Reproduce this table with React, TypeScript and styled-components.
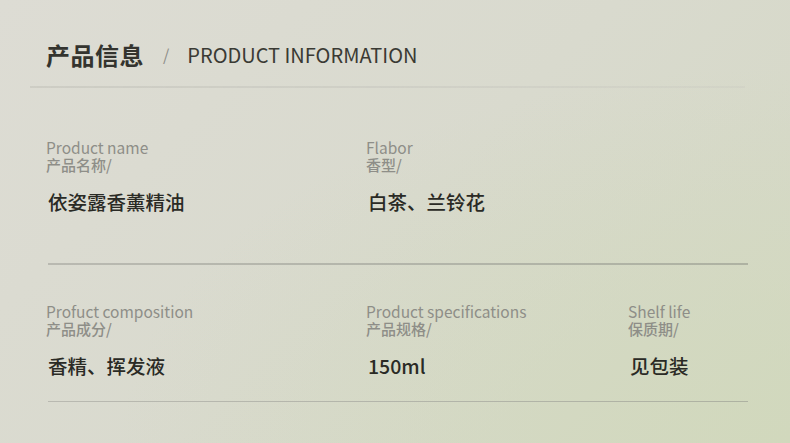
import styled, { createGlobalStyle } from "styled-components";

const GlobalStyle = createGlobalStyle`
  html, body {
    margin: 0;
    padding: 0;
  }
  body {
    font-family: "Noto Sans CJK SC", "Noto Sans", sans-serif;
  }
`;

type Field = { en: string; zh: string; value: string };

const rows: { top: number; bottom: number; fields: Field[] }[] = [
  {
    top: 50,
    bottom: 48,
    fields: [
      { en: "Product name", zh: "产品名称/", value: "依姿露香薰精油" },
      { en: "Flabor", zh: "香型/", value: "白茶、兰铃花" },
    ],
  },
  {
    top: 37,
    bottom: 22,
    fields: [
      { en: "Profuct composition", zh: "产品成分/", value: "香精、挥发液" },
      { en: "Product specifications", zh: "产品规格/", value: "150ml" },
      { en: "Shelf life", zh: "保质期/", value: "见包装" },
    ],
  },
];

export default function App() {
  return (
    <>
      <GlobalStyle />
      <Page>
        <Header>
          <TitleZh>产品信息</TitleZh>
          <Slash>/</Slash>
          <TitleEn>PRODUCT INFORMATION</TitleEn>
        </Header>
        <HeaderRule />
        {rows.map((row, i) => (
          <div key={i}>
            <Row $top={row.top} $bottom={row.bottom}>
              {row.fields.map((f) => (
                <Cell key={f.en}>
                  <LabelEn>{f.en}</LabelEn>
                  <LabelZh>{f.zh}</LabelZh>
                  <Value>{f.value}</Value>
                </Cell>
              ))}
            </Row>
            <RowRule />
          </div>
        ))}
      </Page>
    </>
  );
}

const Page = styled.div`
  width: 790px;
  height: 443px;
  box-sizing: border-box;
  padding: 39px 0 0 30px;
  overflow: hidden;
  background:
    radial-gradient(ellipse at 100% 100%, rgba(208, 216, 186, 0.75) 0%, rgba(208, 216, 186, 0) 60%),
    linear-gradient(135deg, #dddcd4 0%, #d9dace 50%, #d4d8c4 100%);
`;

const Header = styled.div`
  display: flex;
  align-items: center;
  height: 30px;
  padding-left: 16px;
`;

const TitleZh = styled.div`
  font-size: 24px;
  font-weight: 700;
  color: #34342f;
  letter-spacing: 0.5px;
`;

const Slash = styled.div`
  margin: 0 18px 0 19px;
  font-size: 16px;
  color: #8d8d88;
`;

const TitleEn = styled.div`
  font-size: 20px;
  font-weight: 400;
  color: #3a3a34;
`;

const HeaderRule = styled.div`
  margin-top: 17px;
  width: 715px;
  height: 2px;
  background: linear-gradient(90deg, rgba(190, 190, 182, 0.5), rgba(200, 200, 192, 0.6) 50%, rgba(200, 200, 192, 0.3));
  filter: blur(0.6px);
`;

const Row = styled.div<{ $top: number; $bottom: number }>`
  display: grid;
  grid-template-columns: 320px 262px 1fr;
  padding: ${(p) => p.$top}px 0 ${(p) => p.$bottom}px 16px;
`;

const Cell = styled.div`
  display: flex;
  flex-direction: column;
`;

const LabelEn = styled.div`
  font-size: 15.5px;
  line-height: 18px;
  color: #8e8e88;
`;

const LabelZh = styled.div`
  font-size: 15px;
  line-height: 18px;
  font-weight: 500;
  color: #8e8e88;
`;

const Value = styled.div`
  margin-top: 15px;
  padding-left: 2px;
  font-size: 19.5px;
  line-height: 26px;
  font-weight: 500;
  color: #2a2a25;
`;

const RowRule = styled.div`
  margin-left: 18px;
  width: 700px;
  height: 1.5px;
  background: linear-gradient(90deg, #b9b9b1, #b3b5aa 50%, #aeb2a2);
`;
